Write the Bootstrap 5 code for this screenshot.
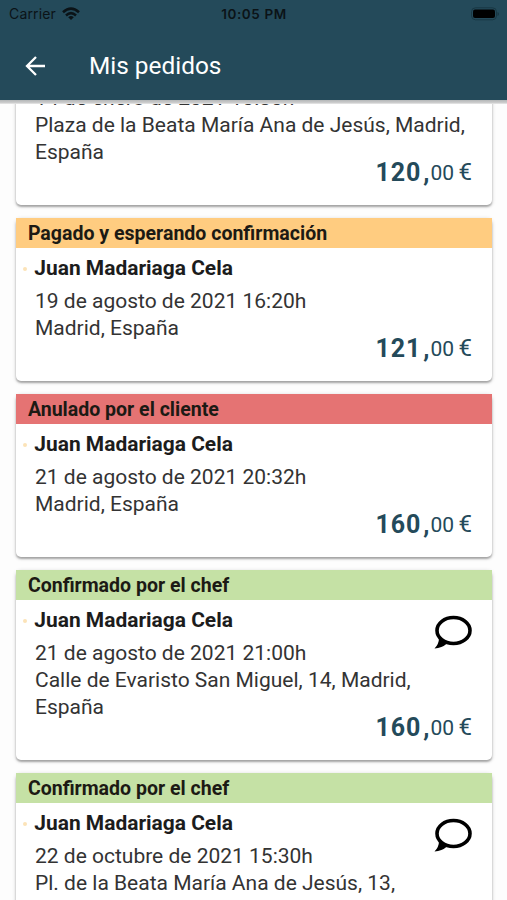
<!DOCTYPE html>
<html lang="es">
<head>
<meta charset="utf-8">
<meta name="viewport" content="width=device-width, initial-scale=1">
<title>Mis pedidos</title>
<link href="https://cdn.jsdelivr.net/npm/bootstrap@5.3.0/dist/css/bootstrap.min.css" rel="stylesheet">
<style>
  html, body { height: 900px; overflow: hidden; }
  body { font-family: Roboto, sans-serif; background: #fdfdfd; color: #1f1f1f; }
  .app-top { height: 100px; background: #244a5a; }
  .app-top::after { content: ""; position: absolute; top: 100px; left: 0; right: 0; height: 4px;
    background: linear-gradient(#b4b7b8, #cfcfcf 75%, #f0f0f0); }
  .status { height: 28px; font: 13px/28px Inter, sans-serif; color: #0b1317; padding: 0 8px 0 9px; }
  .status > * { flex: 1 1 0; }
  .carrier { font-size: 14px; letter-spacing: .15px; }
  .wifi { margin-left: 6px; }
  .clock { font-weight: 600; font-size: 13.5px; letter-spacing: .6px; }
  .title-row { height: 72px; padding: 4px 0 0 24px; }
  .page-title { font-size: 24.4px; line-height: 30px; margin: 0 0 1px 41px; }
  .orders { height: 900px; overflow: hidden; padding: 15px 15px 0 15.6px; gap: 12.6px; }
  .order { --bs-card-border-width: 0; --bs-card-border-radius: 5px; height: 163.4px; flex: none;
    background: #fff; box-shadow: 0 2px 2px rgba(0,0,0,.27), 0 1px 4px rgba(0,0,0,.18); }
  .order.tall { height: 190.2px; }
  .scrolled { padding-bottom: 39px; }
  .state { height: 30.5px; font-size: 19.55px; line-height: 31px; padding-left: 12.3px; font-weight: 700; color: #1c1a14; }
  .paid { background: #ffcc80; }
  .void { background: #e57373; }
  .okay { background: #c5e1a5; }
  .client { font-size: 20.95px; line-height: 27px; font-weight: 700; padding: 7px 0 0 6.7px; height: 39.5px; color: #1c1c1c; }
  .dot { width: 4px; height: 4px; border-radius: 50%; background: #fce3b8; margin: 12px 7px 0 1px; }
  .where { font-size: 21px; line-height: 27px; padding-left: 19.4px; color: #333; }
  .price { right: 20px; bottom: 15.2px; line-height: 32px; color: #244a5a; }
  .euros { font-size: 25px; font-weight: 700; letter-spacing: .9px; }
  .comma { margin-left: 2px; }
  .cents { font-size: 21px; }
  .sign { font-size: 24px; margin-left: 4.5px; }
  .cents, .sign { position: relative; top: -1px; }
  .talk { right: 20px; top: 45px; }
</style>
</head>
<body>
<header class="app-top fixed-top text-white">
  <div class="status d-flex">
    <div class="d-flex align-items-center"><span class="carrier">Carrier</span>
      <svg class="wifi" width="18" height="14" viewBox="0 0 18 14" fill="none" stroke="#0b1317" stroke-width="2.6"><path d="M1 5.2Q9-2 17 5.2M4 8.4Q9 4 14 8.4"/><path d="M9 13 6.2 10.2Q9 8 11.8 10.2Z" fill="#0b1317" stroke="none"/></svg>
    </div>
    <div class="clock text-center text-nowrap">10:05 PM</div>
    <div class="d-flex align-items-center justify-content-end">
      <svg width="29" height="14" viewBox="0 0 29 14"><rect x="1.5" y=".8" width="25" height="12" rx="4" fill="none" stroke="#193743"/><rect x="3" y="2.5" width="22" height="8.6" rx="2" fill="#000"/><path d="M27.5 5v4q1.5-.6 1.5-2T27.5 5" fill="#193743"/></svg>
    </div>
  </div>
  <div class="title-row d-flex align-items-center">
    <svg width="24" height="24" viewBox="0 0 24 24" fill="none" stroke="#fff" stroke-width="2.3"><path d="M21 12H3.5M12 3 3 12l9 9"/></svg>
    <h1 class="page-title fw-normal">Mis pedidos</h1>
  </div>
</header>

<main class="orders d-flex flex-column">
  <article class="order tall card scrolled justify-content-end">
    <div class="where">14 de enero de 2021 10:30h<br>Plaza de la Beata María Ana de Jesús, Madrid,<br>España</div>
    <div class="price position-absolute d-flex align-items-baseline"><span class="euros">120<span class="comma">,</span></span><span class="cents">00</span><span class="sign">€</span></div>
  </article>
  <article class="order card">
    <div class="state paid">Pagado y esperando confirmación</div>
    <div class="client d-flex"><span class="dot"></span>Juan Madariaga Cela</div>
    <div class="where">19 de agosto de 2021 16:20h<br>Madrid, España</div>
    <div class="price position-absolute d-flex align-items-baseline"><span class="euros">121<span class="comma">,</span></span><span class="cents">00</span><span class="sign">€</span></div>
  </article>
  <article class="order card">
    <div class="state void">Anulado por el cliente</div>
    <div class="client d-flex"><span class="dot"></span>Juan Madariaga Cela</div>
    <div class="where">21 de agosto de 2021 20:32h<br>Madrid, España</div>
    <div class="price position-absolute d-flex align-items-baseline"><span class="euros">160<span class="comma">,</span></span><span class="cents">00</span><span class="sign">€</span></div>
  </article>
  <article class="order tall card">
    <div class="state okay">Confirmado por el chef</div>
    <div class="client d-flex"><span class="dot"></span>Juan Madariaga Cela</div>
    <div class="where">21 de agosto de 2021 21:00h<br>Calle de Evaristo San Miguel, 14, Madrid,<br>España</div>
    <svg class="talk position-absolute" width="39" height="35" viewBox="0 0 39 35"><ellipse cx="20.5" cy="15.5" rx="16.5" ry="13" fill="none" stroke="#000" stroke-width="3.6"/><path d="M6 23Q6 29 1.5 33.5 9 33 14 28.5Z"/></svg>
    <div class="price position-absolute d-flex align-items-baseline"><span class="euros">160<span class="comma">,</span></span><span class="cents">00</span><span class="sign">€</span></div>
  </article>
  <article class="order tall card">
    <div class="state okay">Confirmado por el chef</div>
    <div class="client d-flex"><span class="dot"></span>Juan Madariaga Cela</div>
    <div class="where">22 de octubre de 2021 15:30h<br>Pl. de la Beata María Ana de Jesús, 13,</div>
    <svg class="talk position-absolute" width="39" height="35" viewBox="0 0 39 35"><ellipse cx="20.5" cy="15.5" rx="16.5" ry="13" fill="none" stroke="#000" stroke-width="3.6"/><path d="M6 23Q6 29 1.5 33.5 9 33 14 28.5Z"/></svg>
  </article>
</main>
<script src="https://cdn.jsdelivr.net/npm/bootstrap@5.3.0/dist/js/bootstrap.bundle.min.js"></script>
</body>
</html>
